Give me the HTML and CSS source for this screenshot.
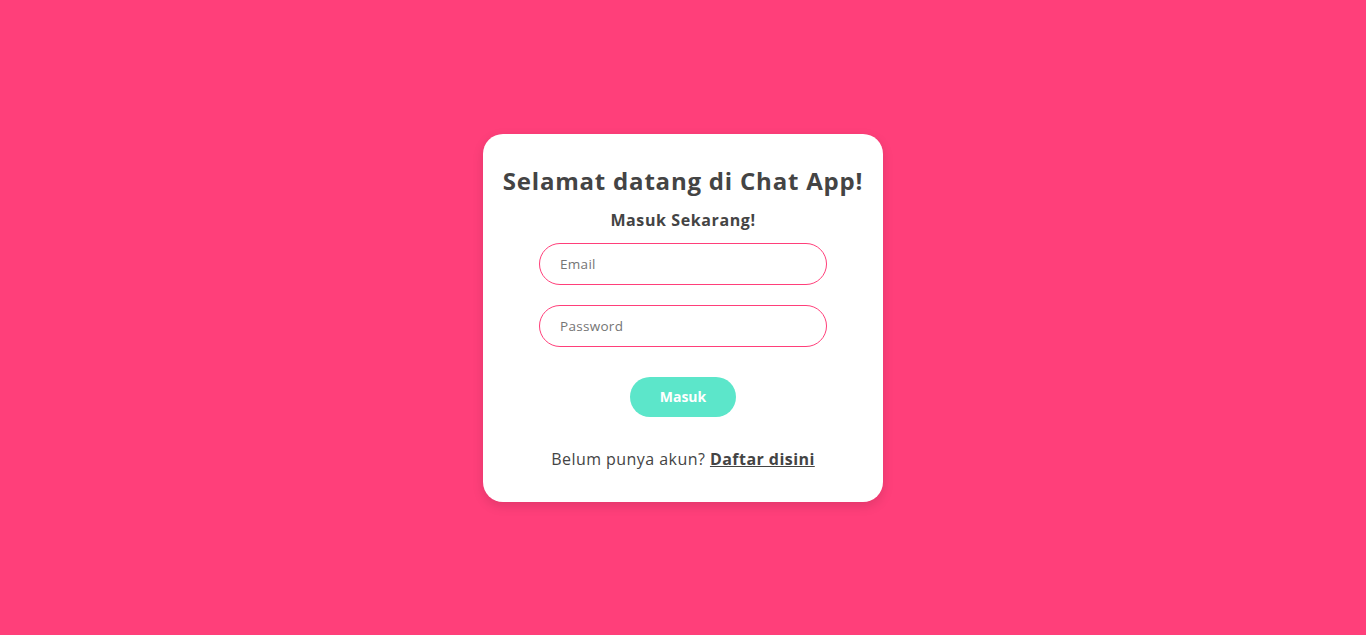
FILE: index.html
```html
<!DOCTYPE html>
<html lang="id">
<head>
<meta charset="utf-8">
<title>Chat App - Masuk</title>
<link rel="stylesheet" href="styles.css">
</head>
<body>
<main class="page">
  <div class="card">
    <h2 class="title">Selamat datang di Chat App!</h2>
    <p class="subtitle">Masuk Sekarang!</p>
    <form class="form">
      <input class="field" type="email" placeholder="Email">
      <input class="field" type="password" placeholder="Password">
      <button class="btn" type="button">Masuk</button>
    </form>
    <p class="footer">Belum punya akun? <a class="link" href="#">Daftar disini</a></p>
  </div>
</main>
</body>
</html>
```
FILE: styles.css
```css
* { box-sizing: border-box; }
html, body { margin: 0; padding: 0; }
body {
  background: #ff3f7a;
  font-family: "Open Sans", "Noto Sans", sans-serif;
  color: #444;
}
.page {
  height: 635px;
  display: flex;
  align-items: center;
  justify-content: center;
}
.card {
  width: 400px;
  background: #fff;
  border-radius: 20px;
  padding: 29px 10px 31px;
  box-shadow: 0 4px 12px rgba(0,0,0,0.12);
  display: flex;
  flex-direction: column;
  align-items: center;
}
.title {
  margin: 0;
  font-size: 24px;
  line-height: 36px;
  font-weight: 700;
  letter-spacing: 0.8px;
  white-space: nowrap;
}
.subtitle {
  margin: 9px 0 0;
  font-size: 16px;
  line-height: 24px;
  font-weight: 700;
  letter-spacing: 0.6px;
}
.form {
  margin-top: 11px;
  display: flex;
  flex-direction: column;
  align-items: center;
  gap: 20px;
}
.field {
  width: 288px;
  height: 42px;
  border: 1px solid #ff3f7a;
  border-radius: 21px;
  padding: 0 20px;
  font-family: inherit;
  font-size: 13.5px;
  letter-spacing: 0.3px;
  color: #444;
  outline: none;
}
.field::placeholder { color: #757575; }
.btn {
  margin-top: 10px;
  width: 106px;
  height: 40px;
  border: none;
  border-radius: 20px;
  background: #5ce6ca;
  color: #fff;
  font-family: inherit;
  font-weight: 700;
  font-size: 14px;
}
.footer {
  margin: 30px 0 0;
  font-size: 16px;
  line-height: 24px;
  letter-spacing: 0.45px;
}
.link {
  color: #444;
  font-weight: 700;
}
```
